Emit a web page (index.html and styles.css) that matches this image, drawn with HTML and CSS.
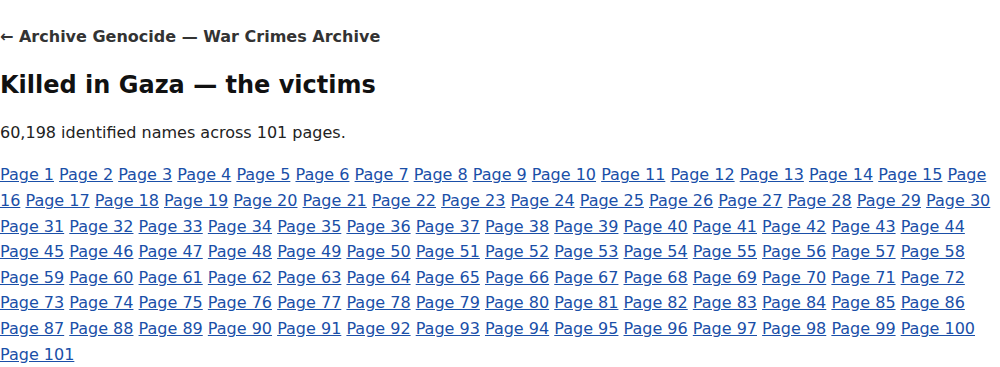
FILE: index.html
```html
<!DOCTYPE html>
<html lang="en">
<head>
<meta charset="utf-8">
<title>Killed in Gaza — the victims</title>
<link rel="stylesheet" href="styles.css">
</head>
<body>
<main class="page">
<nav class="crumb"><a href="#">← Archive Genocide — War Crimes Archive</a></nav>
<h1 class="title">Killed in Gaza — the victims</h1>
<p class="summary">60,198 identified names across 101 pages.</p>
<div class="pages" id="pages"></div>
</main>
<script src="script.js"></script>
</body>
</html>
```
FILE: script.js
```js
var box = document.getElementById('pages');
for (var i = 1; i <= 101; i++) {
  var a = document.createElement('a');
  a.href = '#';
  a.textContent = 'Page ' + i;
  box.appendChild(a);
  if (i < 101) box.appendChild(document.createTextNode(' '));
}
```
FILE: styles.css
```css
html, body { margin: 0; padding: 0; background: #fff; }
body { font-family: "DejaVu Sans", sans-serif; font-size: 16px; line-height: 1.6; color: #222; }
.page { padding: 24px 0 0 0; }
.crumb { margin: 0; font-size: 16px; font-weight: bold; }
.crumb a { color: #333; text-decoration: none; }
.title { margin: 20px 0 0 0; font-size: 24px; font-weight: bold; color: #111; line-height: 1.3; }
.summary { margin: 19px 0 0 0; color: #222; }
.pages { margin-top: 17px; }
.pages a { color: #1a4fa8; }
```
